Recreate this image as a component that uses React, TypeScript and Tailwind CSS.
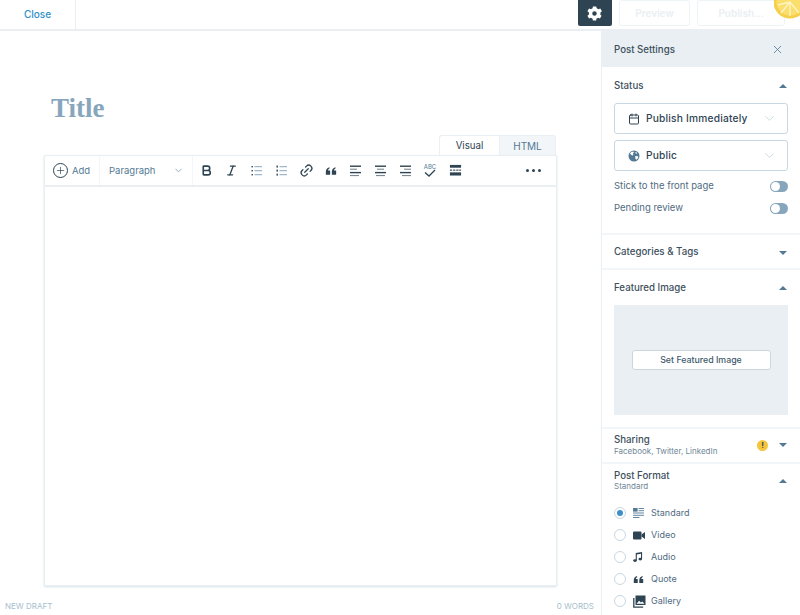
import React from "react";
import { Calendar, ChevronDown, Plus, X, Link2, Bold, Italic } from "lucide-react";

const ink = "#2e4453";
const slate = "#537994";

function Quote({ size = 14 }: { size?: number }) {
  return (
    <svg width={size} height={size} viewBox="0 0 14 14" fill={ink}>
      <path d="M1 11.5V8C1 5.5 2.4 3.4 5 2.6l.5 1.2C4.2 4.5 3.6 5.4 3.6 6.4H6v5.1H1z" />
      <path d="M8 11.5V8c0-2.5 1.4-4.6 4-5.4l.5 1.2c-1.3.7-1.9 1.6-1.9 2.6H13v5.1H8z" />
    </svg>
  );
}

function Gear() {
  return (
    <svg width="17" height="17" viewBox="0 0 24 24">
      <path
        fill="#fff"
        fillRule="evenodd"
        d="M20.3 13.4c.1-.4.1-.9.1-1.4s0-1-.1-1.4l2.2-1.7-2.3-4-2.6 1c-.7-.6-1.5-1-2.4-1.4L14.3 2H9.7l-.4 2.5c-.9.4-1.7.8-2.4 1.4l-2.6-1-2.3 4 2.2 1.7c-.1.4-.1.9-.1 1.4s0 1 .1 1.4l-2.2 1.7 2.3 4 2.6-1c.7.6 1.5 1 2.4 1.4l.4 2.5h4.6l.4-2.5c.9-.4 1.7-.8 2.4-1.4l2.6 1 2.3-4-2.2-1.7zM12 15.2a3.2 3.2 0 1 1 0-6.4 3.2 3.2 0 0 1 0 6.4z"
      />
    </svg>
  );
}

function Globe() {
  return (
    <svg width="12" height="12" viewBox="0 0 12 12">
      <circle cx="6" cy="6" r="5.5" fill={slate} />
      <path fill="#fff" d="M3 2.2l2.2-.8.8 1.2-1.2 1 .6 1.4-1.2.4-1.6-1.2L2 3.2zM7.2 6l2.6.3.6 1.2-1.8 2.3-1.2-1zM7.6 2l1.6.8-.6 1-1.2-.6z" />
    </svg>
  );
}

function Lines({ rows }: { rows: [number, number][] }) {
  return (
    <svg width="12" height="12" viewBox="0 0 12 12" fill={ink}>
      {rows.map(([x, w], i) => (
        <rect key={i} x={x} y={0.5 + i * 3.2} width={w} height={i % 2 === 0 ? 1.4 : 1} opacity={i % 2 === 0 ? 1 : 0.7} />
      ))}
    </svg>
  );
}

function BulletList({ ordered }: { ordered?: boolean }) {
  return (
    <svg width="11" height="11" viewBox="0 0 11 11" fill="#87a6bc">
      {[1, 5, 9].map((y) => (
        <g key={y}>
          <rect x="0.5" y={y - (ordered ? 0.4 : 0)} width="1.4" height={ordered ? 2 : 1.4} fill={ink} />
          <rect x="3.5" y={y + 0.2} width="7.5" height="1" />
        </g>
      ))}
    </svg>
  );
}

function Spellcheck() {
  return (
    <svg width="16" height="16" viewBox="0 0 16 16" fill="none">
      <text x="8" y="5.5" textAnchor="middle" fontSize="6" fill={slate} fontFamily="Inter, sans-serif">ABC</text>
      <path d="M3 9.5l4 3.5 6-6" stroke={ink} strokeWidth="1.3" />
    </svg>
  );
}

function MoreBreak() {
  return (
    <svg width="13" height="13" viewBox="0 0 14 14" fill={ink}>
      <rect x="1" y="1" width="12" height="3" />
      <rect x="1" y="6" width="2.4" height="1.2" />
      <rect x="4.4" y="6" width="2.4" height="1.2" />
      <rect x="7.8" y="6" width="2.4" height="1.2" />
      <rect x="11" y="6" width="2" height="1.2" />
      <rect x="1" y="9" width="12" height="3.4" />
    </svg>
  );
}

function StandardIcon() {
  return (
    <svg width="11" height="10" viewBox="0 0 12 11" fill={slate}>
      <rect x="0" y="0" width="5" height="4" />
      <rect x="6" y="0" width="6" height="1" />
      <rect x="6" y="2.5" width="6" height="1" />
      <rect x="0" y="5" width="12" height="1" />
      <rect x="0" y="7.5" width="12" height="1" />
      <rect x="0" y="10" width="7" height="1" />
    </svg>
  );
}

function VideoIcon() {
  return (
    <svg width="12" height="9" viewBox="0 0 12 9" fill={ink}>
      <rect x="0" y="0.5" width="8.5" height="8" rx="1" />
      <path d="M8.5 3.5L12 1v7L8.5 5.5z" />
    </svg>
  );
}

function AudioIcon() {
  return (
    <svg width="10" height="10" viewBox="0 0 11 11" fill={ink}>
      <path d="M3 1.2L10 0v7.8h-1.2V2L4.2 2.8V9.4H3z" />
      <ellipse cx="2.2" cy="9.4" rx="2" ry="1.5" />
      <ellipse cx="8" cy="7.8" rx="2" ry="1.5" />
    </svg>
  );
}

function GalleryIcon() {
  return (
    <svg width="13" height="13" viewBox="0 0 13 13">
      <rect x="2.5" y="0.5" width="10" height="9.5" fill={ink} />
      <path d="M3.5 8.8l2.6-3 1.8 1.8 1.4-1 2.2 2.2z" fill="#fff" />
      <path d="M0.8 3v9.2h9.4" fill="none" stroke={ink} strokeWidth="1.3" />
    </svg>
  );
}

function Toggle() {
  return (
    <div className="flex h-[11px] w-[18px] items-center justify-start rounded-full bg-[#87a6bc]">
      <div className="ml-px h-[9px] w-[9px] rounded-full bg-white" />
    </div>
  );
}

function Caret({ up }: { up?: boolean }) {
  return up ? (
    <div className="h-0 w-0 border-x-[4px] border-b-[4px] border-x-transparent border-b-[#537994]" />
  ) : (
    <div className="h-0 w-0 border-x-[4px] border-t-[4px] border-x-transparent border-t-[#537994]" />
  );
}

function SelectBox({ icon, label }: { icon: React.ReactNode; label: string }) {
  return (
    <div className="flex h-[31px] items-center rounded-[3px] border border-[#c8d7e1] pl-[13px] pr-[10px]">
      <span className="flex w-[18px] shrink-0 justify-start">{icon}</span>
      <span className="whitespace-nowrap text-[10.2px] font-medium tracking-[0.2px] text-[#2e4453]">{label}</span>
      <ChevronDown className="ml-auto text-[#c8d7e1]" size={15} strokeWidth={1.5} />
    </div>
  );
}

const toolbar: React.ReactNode[] = [
  <Bold key="b" size={13} color={ink} strokeWidth={3} />,
  <Italic key="i" size={13} color={ink} strokeWidth={2.4} />,
  <BulletList key="ul" />,
  <BulletList key="ol" ordered />,
  <Link2 key="a" size={15} color={ink} className="-rotate-45" strokeWidth={2} />,
  <Quote key="q" size={12} />,
  <Lines key="l" rows={[[0, 11], [0, 7], [0, 11], [0, 9]]} />,
  <Lines key="c" rows={[[0, 11], [2, 7], [0, 11], [1, 9]]} />,
  <Lines key="r" rows={[[0, 11], [4, 7], [0, 11], [2, 9]]} />,
  <Spellcheck key="s" />,
  <MoreBreak key="m" />,
];

const formats: { label: string; icon: React.ReactNode }[] = [
  { label: "Standard", icon: <StandardIcon /> },
  { label: "Video", icon: <VideoIcon /> },
  { label: "Audio", icon: <AudioIcon /> },
  { label: "Quote", icon: <Quote size={11} /> },
  { label: "Gallery", icon: <GalleryIcon /> },
];

export default function App() {
  return (
    <div className="relative flex h-[615px] w-[800px] flex-col overflow-hidden bg-white font-['Inter',sans-serif] text-[#2e4453]">
      <header className="flex h-[31px] shrink-0 items-stretch border-b-2 border-[#e9eff3]">
        <div className="flex w-[76px] items-center justify-center border-r border-[#e9eff3] pb-px text-[10px] font-medium text-[#2e8fc7]">
          Close
        </div>
        <div className="ml-auto mr-[15px] flex items-start gap-[7px]">
          <div className="flex h-[26px] w-[34px] items-center justify-center rounded-b-[2px] bg-[#2e4453] pr-[2px]">
            <Gear />
          </div>
          <div className="flex h-[26px] w-[71px] items-center justify-center rounded-[3px] border border-[#eef3f6] text-[10px] font-semibold text-[#e9eff3]">Preview</div>
          <div className="flex h-[26px] w-[88px] items-center justify-center rounded-[3px] border border-[#eef3f6] text-[10px] font-semibold text-[#e9eff3]">Publish...</div>
        </div>
      </header>

      <svg className="absolute right-0 top-0" width="26" height="20" viewBox="0 0 26 20">
        <circle cx="16" cy="2" r="16.5" fill="#f5cf4a" />
        <circle cx="16" cy="2" r="13.5" fill="#fbdf6c" />
        <path d="M16 2L7 13M16 2l9 11M16 2V16M16 2L4 5" stroke="#fdf3c4" strokeWidth="1.4" />
      </svg>

      <div className="flex min-h-0 flex-1">
        <main className="flex w-[601px] shrink-0 flex-col px-[44px]">
          <h1 className="ml-[7px] mt-[62px] font-['Liberation_Serif',serif] text-[27px] font-bold leading-[30px] text-[#87a6bc]">Title</h1>
          <div className="mt-[12px] flex justify-end pr-px">
            <div className="flex h-[20px] w-[60px] items-center justify-center rounded-tl-[3px] border-l border-t border-[#e9eff3] bg-white pt-[2px] text-[9.7px] text-[#2e4453]">Visual</div>
            <div className="flex h-[20px] w-[57px] items-center justify-center rounded-tr-[3px] border border-b-0 border-[#e9eff3] bg-[#f3f6f8] pt-[2px] text-[10px] text-[#537994]">HTML</div>
          </div>
          <div className="flex h-[431px] flex-col border border-t-0 border-[#e9eff3] shadow-[0_1px_2px_rgba(200,215,225,0.7)]">
            <div className="flex h-[32px] shrink-0 items-center border-b-2 border-t border-[#e9eff3]">
              <div className="flex h-full w-[55px] items-center gap-[4px] border-r border-[#f3f6f8] pl-[8px]">
                <span className="flex h-[15px] w-[15px] items-center justify-center rounded-full border border-[#2e4453]">
                  <Plus size={11} color={ink} strokeWidth={1.5} />
                </span>
                <span className="pt-px text-[9.5px] text-[#537994]">Add</span>
              </div>
              <div className="flex h-full w-[93px] items-center border-r border-[#f3f6f8] pl-[9px] pr-[8px]">
                <span className="pt-px text-[9.5px] text-[#537994]">Paragraph</span>
                <ChevronDown className="ml-auto text-[#87a6bc]" size={11} />
              </div>
              <div className="flex items-center pl-px">
                {toolbar.map((icon, i) => (
                  <span key={i} className="flex w-[24.9px] justify-center">{icon}</span>
                ))}
              </div>
              <div className="ml-auto flex gap-[2.5px] pr-[15px]">
                <span className="h-[3.5px] w-[3.5px] rounded-full bg-[#2e4453]" />
                <span className="h-[3.5px] w-[3.5px] rounded-full bg-[#2e4453]" />
                <span className="h-[3.5px] w-[3.5px] rounded-full bg-[#2e4453]" />
              </div>
            </div>
          </div>
          <div className="-ml-[39px] -mr-[37px] mt-[14px] flex justify-between text-[8px] uppercase text-[#a8bece]">
            <span>New Draft</span>
            <span>0 Words</span>
          </div>
        </main>

        <aside className="flex w-[199px] flex-col border-l border-[#e9eff3]">
          <div className="flex h-[36px] shrink-0 items-center justify-between bg-[#e9eff3] pl-[12px] pr-[16px] text-[9.7px] font-medium text-[#3d4f5c]">
            <span className="pt-[2px]">Post Settings</span>
            <X size={13} color={slate} strokeWidth={1.5} />
          </div>

          <section className="flex flex-col border-b-2 border-[#f3f6f8] px-[12px] pb-[18px] pt-[12px]">
            <div className="flex items-center justify-between pr-[1px] text-[9.7px] font-medium leading-[14px] text-[#3d4f5c]">
              Status
              <Caret up />
            </div>
            <div className="mt-[10px] flex flex-col gap-[6px]">
              <SelectBox icon={<Calendar size={12} color={ink} />} label="Publish Immediately" />
              <SelectBox icon={<Globe />} label="Public" />
            </div>
            <div className="mt-[8px] flex flex-col gap-[8px] text-[9.5px] leading-[14px] text-[#4f6b7f]">
              <div className="flex items-center justify-between">Stick to the front page<Toggle /></div>
              <div className="flex items-center justify-between">Pending review<Toggle /></div>
            </div>
          </section>

          <section className="flex h-[35px] shrink-0 items-center justify-between border-b-2 border-[#f3f6f8] pl-[12px] pr-[13px] pt-[2px] text-[9.7px] font-medium text-[#3d4f5c]">
            Categories &amp; Tags
            <Caret />
          </section>

          <section className="flex flex-col border-b-2 border-[#f3f6f8] px-[12px] pb-[12px] pt-[11px]">
            <div className="flex items-center justify-between pr-[1px] text-[9.7px] font-medium leading-[14px] text-[#3d4f5c]">
              Featured Image
              <Caret up />
            </div>
            <div className="mt-[10px] flex h-[110px] items-center justify-center bg-[#e9eff3]">
              <div className="flex h-[20px] w-[139px] items-center justify-center rounded-[3px] border border-[#c8d7e1] bg-white text-[8.8px] font-medium text-[#3d596d]">Set Featured Image</div>
            </div>
          </section>

          <section className="flex h-[35px] shrink-0 items-center border-b-2 border-[#f3f6f8] pb-px pl-[12px] pr-[13px]">
            <div className="flex flex-col">
              <span className="text-[9.7px] font-medium leading-[12px] text-[#3d4f5c]">Sharing</span>
              <span className="text-[8px] leading-[11px] text-[#6f8797]">Facebook, Twitter, LinkedIn</span>
            </div>
            <span className="ml-auto mr-[11px] flex h-[11px] w-[11px] items-center justify-center rounded-full bg-[#f5c53d] text-[8px] font-bold text-[#2e4453]">!</span>
            <Caret />
          </section>

          <section className="flex flex-col pl-[12px] pr-[13px] pt-[6px]">
            <div className="flex items-center justify-between">
              <div className="flex flex-col">
                <span className="text-[9.7px] font-medium leading-[11px] text-[#3d4f5c]">Post Format</span>
                <span className="text-[8px] leading-[11px] text-[#6f8797]">Standard</span>
              </div>
              <Caret up />
            </div>
            <div className="mt-[15px] flex flex-col gap-[10px]">
              {formats.map((f, i) => (
                <div key={f.label} className="flex h-[12px] items-center">
                  <span className="flex h-[12px] w-[12px] items-center justify-center rounded-full border border-[#c8d7e1]">
                    {i === 0 && <span className="h-[6px] w-[6px] rounded-full bg-[#3d8fc7]" />}
                  </span>
                  <span className="ml-[7px] flex w-[18px] justify-start">{f.icon}</span>
                  <span className="text-[9px] text-[#4f6b7f]">{f.label}</span>
                </div>
              ))}
            </div>
          </section>
        </aside>
      </div>
    </div>
  );
}
